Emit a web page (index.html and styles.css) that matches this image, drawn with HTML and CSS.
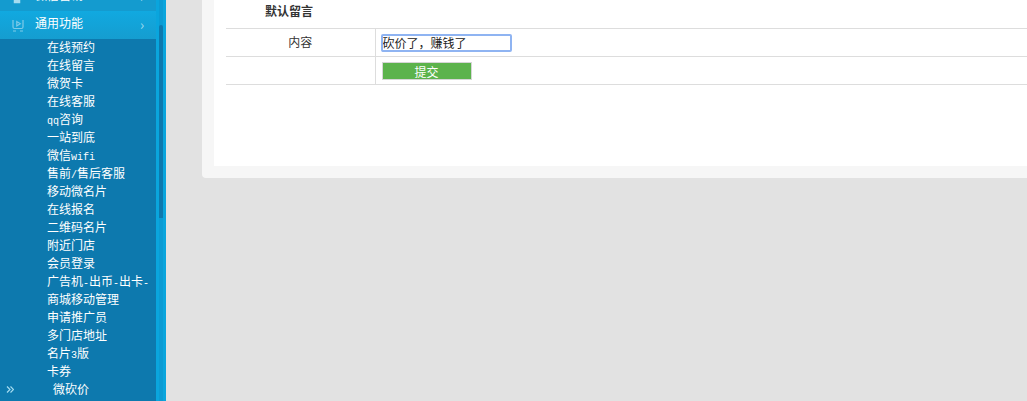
FILE: index.html
```html
<!DOCTYPE html>
<html lang="zh-CN">
<head>
    <meta charset="UTF-8">
    <title>默认留言</title>
    <link rel="stylesheet" href="styles.css">
</head>
<body>
  <div class="sidebar">
    <div class="nav">
      <div class="nav-head nav-prev">
        <svg class="nav-icon" viewBox="0 0 12 14" width="12" height="14" fill="none" stroke="#a5dcf0" stroke-width="1.500"><path d="M1.500 5q4.500 3 9 0"/><path d="M2.500 10.500h5v2h-5z" fill="#a5dcf0"/></svg>
        <span class="nav-text">微信营销</span>
        <span class="chevron">›</span>
      </div>
      <div class="nav-head nav-active">
        <svg class="nav-icon" viewBox="0 0 12 14" width="12" height="14" fill="none" stroke="#7fcbe8" stroke-width="1.200"><path d="M1 2v7q0 1.500 1.500 1.500h7q1.500 0 1.500-1.500V2"/><path d="M4.800 3.500v4.500l3.500-2.200z"/><path d="M1 13h3M8 13h3"/></svg>
        <span class="nav-text">通用功能</span>
        <span class="chevron">›</span>
      </div>
      <ul class="sub-list">
        <li>在线预约</li>
        <li>在线留言</li>
        <li>微贺卡</li>
        <li>在线客服</li>
        <li><span class="latin">qq</span>咨询</li>
        <li>一站到底</li>
        <li>微信<span class="latin">wifi</span></li>
        <li>售前<span class="latin">/</span>售后客服</li>
        <li>移动微名片</li>
        <li>在线报名</li>
        <li>二维码名片</li>
        <li>附近门店</li>
        <li>会员登录</li>
        <li>广告机<span class="latin">-</span>出币<span class="latin">-</span>出卡<span class="latin">-</span></li>
        <li>商城移动管理</li>
        <li>申请推广员</li>
        <li>多门店地址</li>
        <li>名片<span class="latin">3</span>版</li>
        <li>卡券</li>
        <li class="sub-last">微砍价</li>
      </ul>
    </div>
    <div class="scroll-track"><div class="scroll-thumb"></div></div>
    <svg class="collapse" viewBox="0 0 8 7" width="8" height="7" fill="none" stroke="#a5dcf0" stroke-width="1.200"><path d="M1 .5l3 3-3 3M4.500 .5l3 3-3 3"/></svg>
  </div>

  <div class="main">
    <div class="panel">
      <div class="panel-inner">
        <div class="form-title">默认留言</div>
        <table class="form-table">
          <tr>
            <td class="label">内容</td>
            <td><input type="text" class="text-input" value="砍价了，赚钱了"></td>
          </tr>
          <tr>
            <td class="label"></td>
            <td><button type="submit" class="submit-btn">提交</button></td>
          </tr>
        </table>
      </div>
    </div>
  </div>
</body>
</html>
```

FILE: styles.css
```css
html, body {
    height: 100%;
}
body {
    margin: 0;
    display: flex;
    overflow: hidden;
    background-color: #e2e2e2;
    font-family: "Noto Sans CJK SC", "Liberation Sans", sans-serif;
    font-size: 12px;
    color: #333;
}

/* sidebar */
.sidebar {
    position: relative;
    flex: 0 0 166px;
    height: 401px;
    overflow: hidden;
    background-color: #0aa5dd;
}
.nav {
    width: 156px;
    height: 100%;
    overflow: hidden;
    background-color: #0d79ae;
    color: #fff;
}
.nav-head {
    position: relative;
    display: flex;
    align-items: center;
    height: 28px;
    padding-left: 12px;
    box-sizing: border-box;
}
.nav-prev {
    margin-top: -17px;
    background-color: #149bcf;
}
.nav-active {
    background-image: linear-gradient(#11a9e0, #159dd0);
}
.nav-icon {
    flex: none;
    margin-right: 11px;
}
.nav-text {
    padding-bottom: 5px;
}
.chevron {
    position: absolute;
    left: 140px;
    top: 3px;
    font-size: 14px;
    color: #a5dcf0;
}
.sub-list {
    list-style: none;
    margin: 0;
    padding: 0;
}
.sub-list li {
    height: 18px;
    line-height: 16px;
    padding-left: 47px;
    white-space: nowrap;
}
.sub-list .sub-last {
    padding-left: 53px;
}
.latin {
    font-family: "Liberation Mono", monospace;
    font-size: 10px;
}
.scroll-track {
    position: absolute;
    left: 159px;
    top: 0;
    bottom: 0;
    width: 4px;
    background-color: #0b9bd3;
}
.scroll-thumb {
    width: 4px;
    height: 193px;
    margin-top: 25px;
    border-radius: 2px 2px 0 0;
    background-color: #0d79ae;
}
.collapse {
    position: absolute;
    left: 6px;
    bottom: 8px;
}

/* main */
.main {
    flex: 1;
    padding-left: 36px;
}
.panel {
    height: 178px;
    box-sizing: border-box;
    padding: 0 0 12px 12px;
    background-color: #f6f6f6;
    border-bottom-left-radius: 4px;
}
.panel-inner {
    height: 100%;
    background-color: #fff;
}
.form-title {
    height: 22px;
    line-height: 22px;
    padding-left: 51px;
    font-weight: bold;
}
.form-table {
    width: 801px;
    margin-top: 6px;
    margin-left: 12px;
    border-collapse: collapse;
    border-top: 1px solid #ddd;
}
.form-table td {
    height: 27px;
    padding: 0;
    border-bottom: 1px solid #ddd;
}
.form-table .label {
    width: 149px;
    padding-bottom: 2px;
    box-sizing: border-box;
    border-right: 1px solid #ddd;
    text-align: center;
}
.text-input {
    display: block;
    width: 131px;
    height: 18px;
    box-sizing: border-box;
    margin-left: 5px;
    padding: 0;
    border: 2px solid #8fb4f2;
    border-radius: 2px;
    outline: none;
    font-family: inherit;
    font-size: 12px;
    color: #222;
}
.submit-btn {
    display: block;
    width: 90px;
    height: 18px;
    margin-left: 6px;
    padding: 0 0 2px;
    border: 1px solid #d6d6d6;
    background-color: #5cb34c;
    color: #fff;
    font-family: inherit;
    font-size: 12px;
}
```
